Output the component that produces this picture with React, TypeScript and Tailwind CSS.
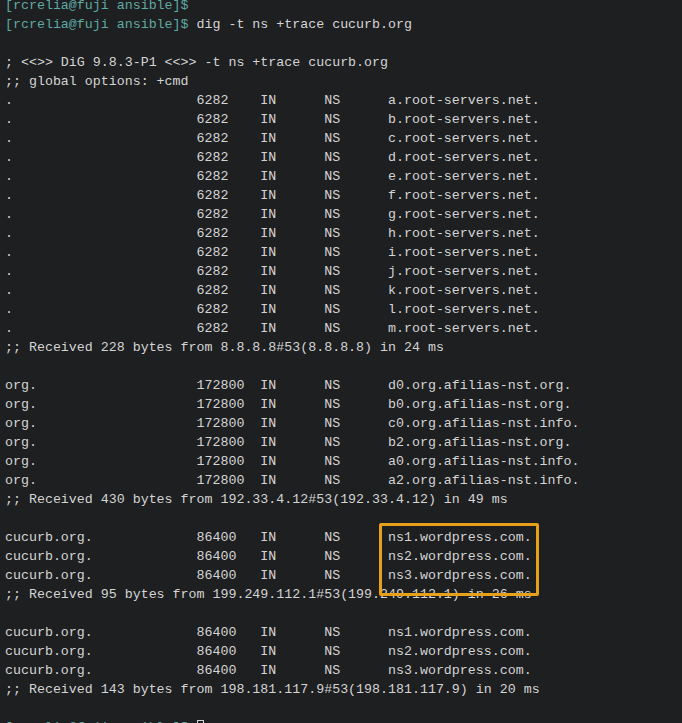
const T = "\t";
const roots = "abcdefghijklm".split("").map((c) => `.${T}${T}${T}6282${T}IN${T}NS${T}${c}.root-servers.net.`);
const orgs = [
  "d0.org.afilias-nst.org.",
  "b0.org.afilias-nst.org.",
  "c0.org.afilias-nst.info.",
  "b2.org.afilias-nst.org.",
  "a0.org.afilias-nst.info.",
  "a2.org.afilias-nst.info.",
].map((n) => `org.${T}${T}${T}172800${T}IN${T}NS${T}${n}`);
const ns = [1, 2, 3].map((i) => `cucurb.org.${T}${T}86400${T}IN${T}NS${T}ns${i}.wordpress.com.`);

const lines: string[] = [
  "",
  "; <<>> DiG 9.8.3-P1 <<>> -t ns +trace cucurb.org",
  ";; global options: +cmd",
  ...roots,
  ";; Received 228 bytes from 8.8.8.8#53(8.8.8.8) in 24 ms",
  "",
  ...orgs,
  ";; Received 430 bytes from 192.33.4.12#53(192.33.4.12) in 49 ms",
  "",
  ...ns,
  ";; Received 95 bytes from 199.249.112.1#53(199.249.112.1) in 26 ms",
  "",
  ...ns,
  ";; Received 143 bytes from 198.181.117.9#53(198.181.117.9) in 20 ms",
  "",
];

export default function App() {
  return (
    <div className="relative w-[682px] h-[723px] overflow-hidden bg-[#1e1f21] text-[#d4d4d4] font-[family-name:Liberation_Mono] text-[13.3px] leading-[19px]">
      <div className="pl-[5px] mt-[-4.5px] whitespace-pre [tab-size:8]">
        <div className="text-[#5fa9a3]">[rcrelia@fuji ansible]$</div>
        <div>
          <span className="text-[#5fa9a3]">[rcrelia@fuji ansible]$</span> dig -t ns +trace cucurb.org
        </div>
        {lines.map((l, i) => (
          <div key={i}>{l || " "}</div>
        ))}
        <div className="text-[#5fa9a3]">
          [rcrelia@fuji ansible]$ <span className="inline-block w-[7px] h-[14px] border border-[#d4d4d4] align-middle" />
        </div>
      </div>
      <div className="absolute left-[379px] top-[523px] w-[160px] h-[73px] border-[3px] border-[#e6a019] rounded-[2px]" />
    </div>
  );
}
